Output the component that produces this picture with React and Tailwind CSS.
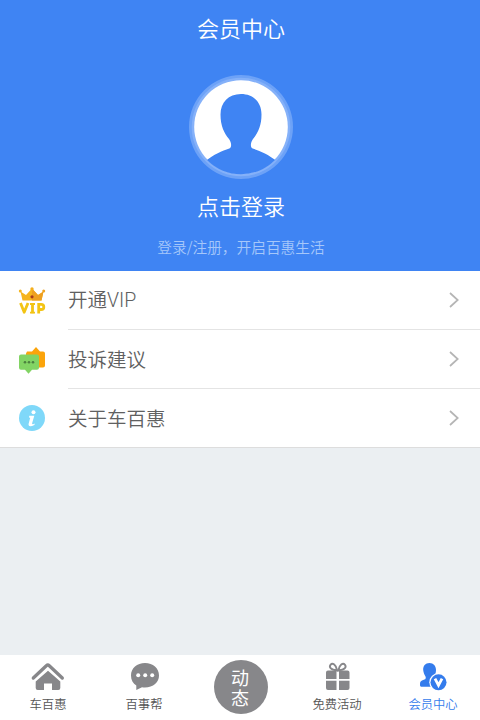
const FONT = "font-['Noto_Sans_CJK_SC','Noto_Sans',sans-serif]";

function Avatar() {
  return (
    <svg className="ml-[2px] mt-[18px] h-[106px] w-[106px] shrink-0" viewBox="0 0 106 106">
      <defs>
        <clipPath id="face">
          <circle cx="53" cy="53" r="47.300" />
        </clipPath>
      </defs>
      <circle cx="53" cy="53" r="52" fill="#6da2f7" />
      <circle cx="53" cy="53" r="49.300" fill="#85b1f9" />
      <circle cx="53" cy="53" r="46.800" fill="#fff" />
      <path
        clipPath="url(#face)"
        fill="#3f84f3"
        d="M53 20c-12.500 0-20.500 8.500-20.500 20.500 0 11 3.500 18.500 8.500 24.500 2.500 3.500 3 8 .3 9.500C34 77 26 80 17 87.500V106h72V87.500C80 80 72 77 64.700 74.500c-2.700-1.500-2.200-6 .3-9.500C70 59 73.500 51.500 73.500 40.500 73.500 28.500 65.500 20 53 20z"
      />
    </svg>
  );
}

function VipIcon() {
  return (
    <svg className="h-7 w-7" viewBox="0 0 28 28">
      <path d="M2.500 4.500 8 8l6-6.500L20 8l5.500-3.500L23.500 13.500h-19z" fill="#f6b41c" />
      <path d="M14 1.500 20 8l5.500-3.500-2 9H14z" fill="#ee9f20" />
      <circle cx="2.300" cy="4" r="1.500" fill="#f5b51d" />
      <circle cx="25.700" cy="4" r="1.500" fill="#f0a321" />
      <circle cx="14" cy="2" r="1.700" fill="#f4ae1c" />
      <circle cx="14" cy="9.800" r="1.600" fill="#a83a1c" />
      <g fill="none" stroke="#f3c414" strokeWidth="2.800">
        <path d="m2.500 16 3.700 9.200L10 16" strokeLinejoin="round" />
        <path d="M12 17h5M12 25.600h5" strokeWidth="1.800" />
        <path d="M14.500 16.200v10M20.700 26.500v-9.200h2.500a2.300 2.300 0 0 1 0 5.200h-2.500" />
      </g>
    </svg>
  );
}

function FeedbackIcon() {
  return (
    <svg className="h-7 w-7" viewBox="0 0 28 28">
      <path d="M9 5.500h5L18 1l4 4.500h3q2 0 2 2v12q0 2-2 2H10q-2 0-2-2v-12z" fill="#fba40b" />
      <path d="M3 8.500h16q2 0 2 2v11.200q0 2-2 2h-5L10.500 27.700 7 23.700H3q-2 0-2-2V10.500q0-2 2-2z" fill="#82d464" />
      <g fill="#4c813f">
        <circle cx="7" cy="16.300" r="1.300" />
        <circle cx="11" cy="16.300" r="1.300" />
        <circle cx="15" cy="16.300" r="1.300" />
      </g>
    </svg>
  );
}

function InfoIcon() {
  return (
    <svg className="h-7 w-7" viewBox="0 0 28 28">
      <circle cx="14" cy="14" r="13" fill="#7fd8f9" />
      <circle cx="15.500" cy="8.300" r="2" fill="#fff" />
      <path d="M11.300 11.800h5l-2.200 7.500q-.2 1.300 1.700.6l1-.5-.4 1.600q-6 3-5.900-.8l1.700-6.500-1.200-.3z" fill="#fff" />
    </svg>
  );
}

function Chevron() {
  return (
    <svg className="mr-[20px] h-4 w-[12px]" viewBox="0 0 12 16" fill="none" stroke="#b5b5b5" strokeWidth="1.700">
      <path d="m2 1 7.700 7L2 15" />
    </svg>
  );
}

function Row({ icon, label, latin, last }) {
  return (
    <div className={`flex items-center pl-[18px] ${last ? "h-[58px]" : "h-[59px]"}`}>
      <div className="w-[50px] shrink-0">{icon}</div>
      <div className={`flex h-full flex-1 items-center justify-between ${last ? "" : "border-b border-[#e4e4e4]"}`}>
        <span className="text-[19.500px] font-[350] leading-none text-[#606060]">
          {label}
          {latin && <span className="font-['Roboto',sans-serif] font-light">{latin}</span>}
        </span>
        <Chevron />
      </div>
    </div>
  );
}

function HomeIcon() {
  return (
    <svg className="h-8 w-9" viewBox="0 0 36 32">
      <path d="M3.300 18 16.300 5.700q1.500-1.300 3 0L32.300 18" fill="none" stroke="#87878a" strokeWidth="3.300" strokeLinecap="round" />
      <path d="m18 10.800 12.300 10.700V28q0 2-2 2H22v-6.500h-8V30H7.700q-2 0-2-2v-6.500z" fill="#87878a" />
    </svg>
  );
}

function ChatIcon() {
  return (
    <svg className="h-8 w-9" viewBox="0 0 36 32">
      <path d="M19 3C11 3 5 8 5 15.500c0 4.500 2 8 5.300 10V30l5.700-2.800c10 1.300 17-4.200 17-11.700C33 8 27 3 19 3z" fill="#87878a" />
      <g fill="#fff">
        <circle cx="12.200" cy="15.200" r="2" />
        <circle cx="19.200" cy="15.200" r="2" />
        <circle cx="26.200" cy="15.200" r="2" />
      </g>
    </svg>
  );
}

function GiftIcon() {
  return (
    <svg className="h-8 w-9" viewBox="0 0 36 32">
      <path d="M9 10.500h8.500V19H7v-6.500q0-2 2-2zM20 10.500h8.500q2 0 2 2V19H20zM7 20.700h10.500V30H9q-2 0-2-2zM20 20.700h10.500V28q0 2-2 2H20z" fill="#87878a" />
      <g fill="none" stroke="#87878a" strokeWidth="1.900">
        <path d="M18.200 10.500C11 9.500 10 7 11.500 4.800c2-2.500 5.700-.3 6.700 5.700z" />
        <path d="M19.300 10.500c7.200-1 8.200-3.500 6.700-5.700-2-2.500-5.700-.3-6.700 5.700z" />
      </g>
    </svg>
  );
}

function MemberIcon() {
  return (
    <svg className="h-8 w-9" viewBox="0 0 36 32">
      <path d="M14.500 3C10.200 3 8 6 8.200 10c.2 2.700 1.200 4.500 2.200 6.200.8 1.600.3 2.900-1 3.400L7 20.500c-1.800.8-2 2-2 4.500 0 1.200.5 1.800 1.800 1.800H18V18c2-2.500 3-5 3-8 0-4-2.500-7-6.500-7z" fill="#347cec" />
      <circle cx="23.500" cy="22.300" r="9.200" fill="#fff" />
      <circle cx="23.500" cy="22.300" r="8" fill="#347cec" />
      <path d="m20 18.700 3.500 6.500 3.500-6.500" fill="none" stroke="#fff" strokeWidth="2.800" />
    </svg>
  );
}

function Tab({ icon, label, active, shifted }) {
  return (
    <div className={`flex w-24 flex-col items-center pt-[5px] ${shifted ? "pl-[2px]" : ""} ${active ? "text-[#347cec]" : "text-[#555555]"}`}>
      {icon}
      <span className="mt-[6px] text-[12.300px] font-[350] leading-[13px]">{label}</span>
    </div>
  );
}

export default function App() {
  return (
    <div className={`${FONT} flex h-[720px] w-[480px] flex-col overflow-hidden bg-[#ebeff2]`}>
      <header className="flex h-[271px] shrink-0 flex-col items-center bg-[#3f84f3] text-white">
        <h1 className="flex h-14 items-center pb-[3px] pl-[2px] text-[22px] font-[350] leading-none">会员中心</h1>
        <Avatar />
        <div className="mt-[13px] pl-[2px] text-[22px] font-[350] leading-6">点击登录</div>
        <div className="mt-5 pl-[2px] text-[14.700px] font-[350] leading-5 text-[#a5c7fa]">登录/注册，开启百惠生活</div>
      </header>
      <main className="shrink-0 border-b border-[#dddddd] bg-white">
        <Row icon={<VipIcon />} label="开通" latin="VIP" />
        <Row icon={<FeedbackIcon />} label="投诉建议" />
        <Row icon={<InfoIcon />} label="关于车百惠" last />
      </main>
      <nav className="mt-auto flex h-[65px] shrink-0 bg-white">
        <Tab icon={<HomeIcon />} label="车百惠" />
        <Tab icon={<ChatIcon />} label="百事帮" />
        <div className="flex w-24 justify-center pl-px pt-[5px]">
          <div className="flex h-[54px] w-[54px] items-center justify-center rounded-full bg-[#87878a] text-white">
            <span className="w-[19px] break-all text-[18px] leading-[20px]">动态</span>
          </div>
        </div>
        <Tab icon={<GiftIcon />} label="免费活动" shifted />
        <Tab icon={<MemberIcon />} label="会员中心" active shifted />
      </nav>
    </div>
  );
}
